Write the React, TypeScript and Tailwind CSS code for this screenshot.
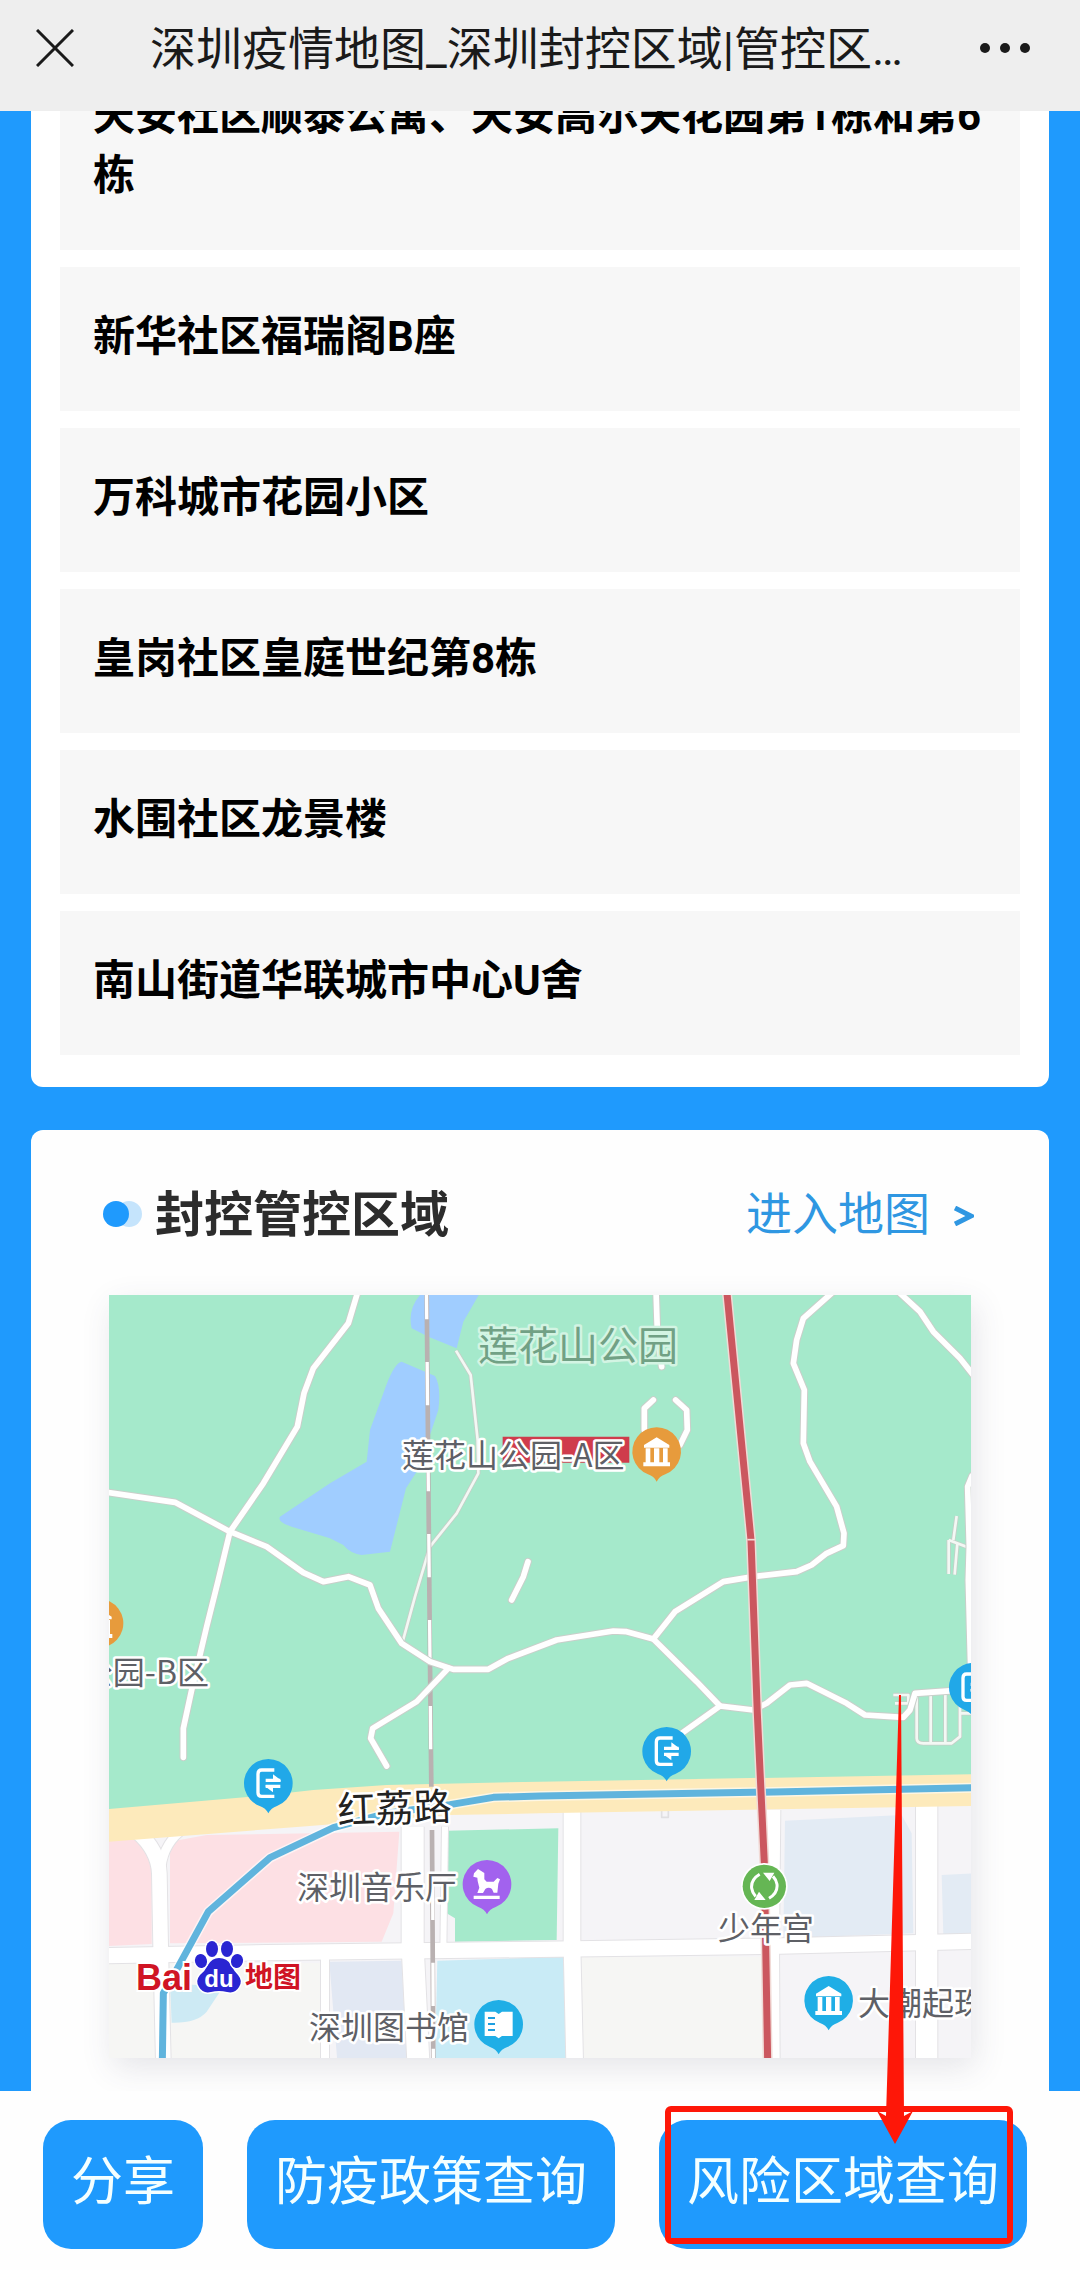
import type { ReactNode } from "react";

const communities = [
  "天安社区顺泰公寓、天安高尔夫花园第1栋和第6栋",
  "新华社区福瑞阁B座",
  "万科城市花园小区",
  "皇岗社区皇庭世纪第8栋",
  "水围社区龙景楼",
  "南山街道华联城市中心U舍",
];

const parkRoads = [
  "M775 30L745 130L640 265L612 340L592 440L490 610L390 755L355 900L320 1040L275 1230L250 1345V1432",
  "M20 637L225 667L390 755L500 800L610 878L670 905L745 890L810 915L835 985L905 1090L990 1145L1060 1168H1165L1225 1135L1370 1080L1540 1053L1580 1055L1660 1077L1790 1205L1860 1278L1960 1290L2000 1270L2070 1215L2120 1210L2240 1270L2295 1305L2410 1312L2430 1290L2445 1240L2560 1232",
  "M1660 1077L1725 995L1870 905L1960 890L2090 875L2135 855L2180 820L2230 797L2232 760L2210 680L2130 545L2110 490L2113 330L2080 250L2090 180L2110 115L2200 35",
  "M2395 35L2460 95L2500 155L2580 235L2620 285",
  "M1668 30L1672 150L1685 260",
  "M1660 360L1633 385V450",
  "M1727 360L1760 390L1762 450L1740 495",
  "M1284 845L1270 890L1235 960",
  "M1045 1165L950 1265L818 1345L812 1375L860 1458",
  "M1860 1278L1745 1360",
  "M2616 588L2603 620L2608 800L2605 900L2614 1240",
];

const lanes = [
  "M1068 212L1112 285L1133 480L1135 580L1070 700L990 800L945 950L908 1085",
  "M2570 708L2560 780M2546 780L2620 808M2546 780V882M2572 790L2564 884",
  "M2450 1250V1375Q2450 1390 2470 1390H2555L2580 1370V1300H2613M2492 1245V1388M2536 1245V1388M2580 1300V1240M2380 1245H2425V1270H2385",
];

const streets = [
  { d: "M112 1655Q175 1710 178 1780L182 2000L190 2345", width: 44 },
  { d: "M240 1655Q185 1700 182 1780", width: 26 },
  { d: "M938 1640V2000L955 2345", width: 66 },
  { d: "M1035 1640L1030 2010", width: 18 },
  { d: "M675 2030V2345", width: 24 },
  { d: "M1416 1590V2000L1424 2345", width: 50 },
  { d: "M2020 1590L2016 2000L2018 2345", width: 42 },
  { d: "M2480 1570V2345", width: 64 },
  { d: "M20 2027L500 2018L1320 2008L2040 1998L2620 1984", width: 46 },
];

const metroLine =
  "M2620 1523L1960 1537L1320 1548L1180 1552L1050 1574L860 1600L700 1643L510 1733L325 1895L235 2060L190 2140L187 2345";
const redLine = "M1880 30L1953 780L1972 1300L1993 1750L2003 2345";

type PinProps = { x: number; y: number; color: string; children: ReactNode };

function Pin({ x, y, color, children }: PinProps) {
  return (
    <g transform={`translate(${x} ${y})`}>
      <path d="M0 90Q-8 74-26 68A73 73 0 1 1 26 68Q8 74 0 90Z" fill={color} />
      {children}
    </g>
  );
}

function ExitGlyph() {
  return (
    <g fill="none" stroke="#fff" strokeWidth="10">
      <path d="M18-40H-20Q-31-40-31-28V28Q-31 39-20 39H18" />
      <path d="M-8-9H36M-8 9H36" />
      <path d="M14-27L37-10V-5H14ZM14 27L-8 10V5H14Z" fill="#fff" stroke="none" />
    </g>
  );
}

function MuseumGlyph() {
  return (
    <g fill="#fff">
      <path d="M0-43L38-20V-12H-38V-20ZM-40 32H40V44H-40Z" />
      <path d="M-33-10H-19V34H-33ZM-8-10H8V34H-8ZM19-10H33V34H19Z" />
    </g>
  );
}

function HorseGlyph() {
  return (
    <path
      d="M-27-46L-8-34V-15L-1-8H20L31-19L39-15L34-2L31 25H20L15 14Q5 6-5 14L-12 26H-29L-23 10L-28-10L-29-20L-41-23L-39-33ZM-40 34H38V44H-40Z"
      fill="#fff"
    />
  );
}

function BookGlyph() {
  return (
    <g>
      <path d="M-42-38H-10L0-31L10-38H42V35H10L0 42L-10 35H-42Z" fill="#fff" />
      <path d="M-32-19H-11M-32-1H-11M-32 17H-11" stroke="#1e9fe0" strokeWidth="6" />
    </g>
  );
}

function AreaMap() {
  return (
    <svg
      viewBox="0 0 862 763"
      role="img"
      aria-label="封控管控区域地图"
      className="block w-full shadow-[4px_10px_30px_rgba(60,60,90,0.13)]"
    >
      <g transform="translate(-9 -15) scale(0.33333)" strokeLinejoin="round">
        <path d="M20 30H2620V2345H20Z" fill="#a5e9cb" />
        <path
          d="M960 30H1145L1090 125L1070 205L985 170L935 145Q922 90 960 45ZM905 245L1005 288Q1024 320 1015 390L985 480L950 575L918 625L870 815L785 825Q750 820 730 795L690 775L575 740Q530 725 540 710L690 610L800 545L810 450L850 340Q880 250 905 245Z"
          fill="#a0cdff"
        />

        <path d="M20 1640L1320 1570L2620 1550V2345H20Z" fill="#f5f4f7" />
        <path d="M20 2050H660V2345H20ZM1445 2030H1990V2345H1445Z" fill="#f6f6f4" />
        <path d="M20 1675L155 1665V1992L20 1998ZM210 1685L320 1665L898 1655L880 1900L845 1985L210 1990Z" fill="#fde0e4" />
        <path d="M1040 1652L1375 1645L1370 1980L1065 1985V1915L1040 1900Z" fill="#a5e9cb" />
        <path d="M1012 2042L1395 2030L1402 2345H1005Z" fill="#c9ebf6" />
        <path d="M210 2110L370 2120L320 2195Q290 2230 215 2228Z" fill="#cdeaf4" />
        <path d="M688 2045L905 2042L920 2345H712Z" fill="#e2e8f3" />
        <path d="M2055 1622L2405 1605L2435 1660L2440 1960L2050 1975ZM2525 1785L2620 1780V1960L2530 1965Z" fill="#e3ebf4" />

        <g fill="none">
          {streets.map((s) => (
            <path key={s.d} d={s.d} stroke="#e3e2e5" strokeWidth={s.width + 6} />
          ))}
          {streets.map((s) => (
            <path key={s.d} d={s.d} stroke="#fff" strokeWidth={s.width} />
          ))}
          <path d="M1685 1580V1612H1705V1580" stroke="#e0dfe2" strokeWidth="5" />
        </g>

        <path
          d="M20 1588L500 1546L640 1530L860 1515L1320 1505L2620 1483V1578L1320 1600L1050 1605L600 1640L20 1686Z"
          fill="#fdeabb"
        />

        <g fill="none">
          {lanes.map((d) => (
            <path key={d} d={d} stroke="#c5cfc8" strokeWidth="13" />
          ))}
          {lanes.map((d) => (
            <path key={d} d={d} stroke="#f3f8f4" strokeWidth="8" />
          ))}
          <path d="M980 30L990 1145L994 1520M996 1650L1000 2345" stroke="#b9b1b1" strokeWidth="14" />
          <path d="M979 -12L990 1145L993 1510" stroke="#fff" strokeWidth="10" strokeDasharray="130 128" />
          <path d="M998 1790L1000 2345" stroke="#fff" strokeWidth="10" strokeDasharray="130 128" />
          <g strokeLinecap="round">
            {parkRoads.map((d) => (
              <path key={d} d={d} stroke="#c9cfca" strokeWidth="23" />
            ))}
            {parkRoads.map((d) => (
              <path key={d} d={d} stroke="#fff" strokeWidth="17" />
            ))}
          </g>

          <path d={metroLine} stroke="#fff" strokeOpacity="0.6" strokeWidth="30" />
          <path d={metroLine} stroke="#60b4dd" strokeWidth="21" />
          <path d={redLine} stroke="#f1dad6" strokeWidth="30" />
          <path d={redLine} stroke="#cb575f" strokeWidth="21" />
          <path d="M1942 779H1968" stroke="#f1dad6" strokeWidth="5" />
        </g>
        <path d="M1208 470H1588V548H1208Z" fill="#cf3c4c" />

        <Pin x={-3} y={1030} color="#e79b3c">
          <MuseumGlyph />
        </Pin>
        <Pin x={1670} y={515} color="#e79b3c">
          <MuseumGlyph />
        </Pin>
        <Pin x={505} y={1510} color="#21a8e8">
          <ExitGlyph />
        </Pin>
        <Pin x={1700} y={1414} color="#21a8e8">
          <ExitGlyph />
        </Pin>
        <Pin x={2620} y={1222} color="#21a8e8">
          <ExitGlyph />
        </Pin>
        <Pin x={1161} y={1813} color="#a262ee">
          <HorseGlyph />
        </Pin>
        <Pin x={1196} y={2233} color="#1faee6">
          <BookGlyph />
        </Pin>
        <Pin x={2186} y={2161} color="#1faee6">
          <MuseumGlyph />
        </Pin>
        <g transform="translate(1993 1819)">
          <circle r="70" fill="#fff" />
          <circle r="65" fill="#65b654" />
          <path d="M-14-36Q-41-20-38 6Q-36 20-26 30M14 36Q41 20 38-6Q36-20 26-30" fill="none" stroke="#fff" strokeWidth="9" />
          <path d="M-4-41H30L16-16ZM4 41H-30L-16 16Z" fill="#fff" />
        </g>
      </g>

      <g
        fill="#5e6066"
        stroke="#fff"
        strokeWidth="5"
        strokeLinejoin="round"
        className="font-['Noto_Sans_CJK_SC',sans-serif] text-[32px] [paint-order:stroke]"
      >
        <text x="369" y="65" fill="#71a185" stroke="#d3f4e3" className="text-[40px]">
          莲花山公园
        </text>
        <text x="293" y="172">莲花山公园-A区</text>
        <text x="100" y="389" textAnchor="end">
          公园-B区
        </text>
        <text x="229" y="529" fill="#222" transform="rotate(-2 229 529)" className="text-[38px]">
          红荔路
        </text>
        <text x="188" y="604">深圳音乐厅</text>
        <text x="200" y="744">深圳图书馆</text>
        <text x="609" y="645">少年宫</text>
        <text x="749" y="720">大潮起珠</text>
      </g>

      <g
        fill="#d01424"
        stroke="#fff"
        strokeWidth="4"
        className="font-['Liberation_Sans','Noto_Sans_CJK_SC',sans-serif] font-bold [paint-order:stroke]"
      >
        <text x="27" y="695" className="text-[36px]">
          Bai
        </text>
        <text x="136" y="692" className="text-[28px]">
          地图
        </text>
        <path
          d="M110 663Q118 663 122 670Q125 676 129 680Q134 686 130 692Q126 699 118 697Q110 695 102 697Q94 699 90 692Q86 686 91 680Q96 676 99 670Q103 663 110 663Z"
          fill="#2a25d2"
          strokeWidth="3"
        />
        <g fill="#2a25d2" strokeWidth="3">
          <ellipse cx="103" cy="654" rx="6" ry="8" />
          <ellipse cx="118" cy="654" rx="6" ry="8" />
          <ellipse cx="92" cy="666" rx="6" ry="7" transform="rotate(-15 92 666)" />
          <ellipse cx="128" cy="666" rx="6" ry="7" transform="rotate(15 128 666)" />
        </g>
        <text x="110" y="692" fill="#fff" stroke="none" textAnchor="middle" className="text-[24px]">
          du
        </text>
      </g>
    </svg>
  );
}

function TopBar() {
  return (
    <header className="relative z-10 flex h-[111px] items-center bg-[#eeeeee] pr-[50px] pb-4 pl-9 text-[#1a1a1a]">
      <button aria-label="关闭" className="shrink-0">
        <svg viewBox="0 0 38 38" className="size-[38px]" fill="none" stroke="currentColor" strokeWidth="3">
          <path d="M1 1L37 37M37 1L1 37" />
        </svg>
      </button>
      <h1 className="mt-[2px] ml-[76px] min-w-0 flex-1 truncate text-[46px] leading-[60px]">
        深圳疫情地图_深圳封控区域|管控区…
      </h1>
      <button aria-label="更多" className="ml-auto shrink-0">
        <svg viewBox="0 0 50 10" className="h-[10px] w-[50px]" fill="currentColor">
          <circle cx="5" cy="5" r="5" />
          <circle cx="25" cy="5" r="5" />
          <circle cx="45" cy="5" r="5" />
        </svg>
      </button>
    </header>
  );
}

function ActionButton({ children }: { children: ReactNode }) {
  return (
    <button className="h-[129px] rounded-[28px] bg-[#1f9afd] px-7 pb-1 text-[52px] whitespace-nowrap text-[#f4ffff]">
      {children}
    </button>
  );
}

export default function App() {
  return (
    <div className="flex min-h-screen flex-col overflow-hidden bg-[#1f9afd] font-[Roboto,'Noto_Sans_CJK_SC',sans-serif]">
      <TopBar />

      <main className="-mt-[65px] flex flex-1 flex-col gap-[43px] px-[31px]">
        <section className="rounded-b-xl bg-white px-[29px] pb-8">
          <ul className="flex flex-col gap-[17px]">
            {communities.map((name) => (
              <li key={name} className="bg-[#f7f7f7] px-[33px] pt-10 pb-11 text-[42px] leading-[60px] font-bold text-black">
                {name}
              </li>
            ))}
          </ul>
        </section>

        <section className="flex-1 rounded-t-xl bg-[#fefefe] px-[78px] pt-12">
          <div className="-mr-[3px] -ml-[6px] flex h-[72px] items-center">
            <span className="flex">
              <span className="z-1 size-[26px] rounded-full bg-[#1f9afd]" />
              <span className="-ml-[13px] size-[26px] rounded-full bg-[#c5e4fc]" />
            </span>
            <h2 className="mt-1 ml-[13px] text-[49px] font-bold text-[#2c2c2c]">封控管控区域</h2>
            <a href="#map" className="ml-auto flex items-center text-[46px] text-[#2f97e2]">
              进入地图
              <svg viewBox="0 0 20 20" className="mt-1 ml-6 size-5" fill="none" stroke="currentColor" strokeWidth="5">
                <path d="M1 2L17 10L1 18" />
              </svg>
            </a>
          </div>
          <div id="map" className="mt-[45px] pb-[33px]">
            <AreaMap />
          </div>
        </section>
      </main>

      <footer className="relative z-10 flex gap-11 bg-[#fefefe] px-[43px] pt-[29px] pb-[21px]">
        <ActionButton>分享</ActionButton>
        <ActionButton>防疫政策查询</ActionButton>
        <div className="relative">
          <ActionButton>风险区域查询</ActionButton>
          <div className="pointer-events-none absolute -top-[14px] left-[6px] h-[138px] w-[348px] rounded-md border-[6px] border-[#fe1708]" />
          <svg viewBox="0 0 36 449" className="pointer-events-none absolute bottom-[105px] left-[218px] h-[449px] w-9" fill="#fe1708">
            <path d="M22 0H24L27 421L36 416L18 449L0 416L9 421Z" />
          </svg>
        </div>
      </footer>
    </div>
  );
}
